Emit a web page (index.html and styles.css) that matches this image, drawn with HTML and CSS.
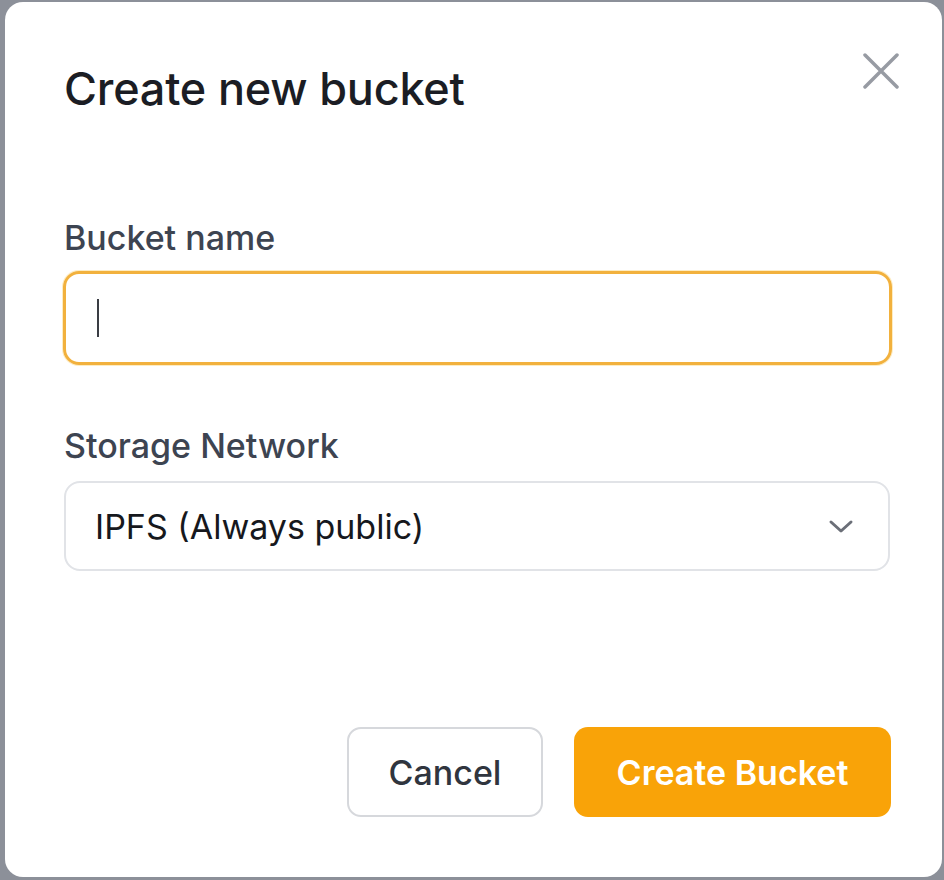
FILE: index.html
```html
<!DOCTYPE html>
<html lang="en">
<head>
<meta charset="utf-8">
<title>Create new bucket</title>
<link rel="stylesheet" href="styles.css">
</head>
<body>
<div class="modal">
  <button class="close" aria-label="Close">
    <svg width="36" height="36" viewBox="0 0 36 36" fill="none" stroke="currentColor" stroke-width="3.5" stroke-linecap="round"><path d="M2 2L34 34M34 2L2 34"/></svg>
  </button>
  <h1 class="title">Create new bucket</h1>
  <div class="form">
    <label class="label">Bucket name</label>
    <div class="input"><span class="caret"></span></div>
    <label class="label label-2">Storage Network</label>
    <div class="select">
      <span>IPFS (Always public)</span>
      <svg width="26" height="16" viewBox="0 0 26 16" fill="none" stroke="currentColor" stroke-width="3" stroke-linecap="round" stroke-linejoin="round"><path d="M3 3L13 12L23 3"/></svg>
    </div>
  </div>
  <div class="actions">
    <button class="btn btn-cancel">Cancel</button>
    <button class="btn btn-primary">Create Bucket</button>
  </div>
</div>
</body>
</html>
```
FILE: styles.css
```css
* { box-sizing: border-box; }
html, body { margin: 0; height: 100%; }
body {
  background: #8c9099;
  padding: 2px 0 0 5px;
  font-family: Inter, "Noto Sans", sans-serif;
  overflow: hidden;
}
.modal {
  position: relative;
  width: 937px;
  height: 875px;
  background: #ffffff;
  border-radius: 18px;
  padding: 61px 51px 60px 58px;
  display: flex;
  flex-direction: column;
}
.close {
  position: absolute;
  top: 51px;
  right: 43px;
  border: 0;
  background: none;
  padding: 0;
  color: #979ba3;
  display: flex;
}
.title {
  margin: 0;
  padding-left: 1px;
  font-size: 45px;
  line-height: 52px;
  font-weight: 500;
  color: #1b1d24;
  letter-spacing: -0.2px;
}
.form {
  margin-top: 103px;
  display: flex;
  flex-direction: column;
}
.label {
  font-size: 34px;
  line-height: 40px;
  font-weight: 500;
  color: #3d4451;
  padding-left: 1px;
}
.label-2 { margin-top: 61px; }
.input {
  margin-top: 13px;
  height: 94px;
  width: 829px;
  border: 3px solid #f2b13d;
  border-radius: 16px;
  box-shadow: 0 0 0 1px rgba(250, 200, 80, 0.35);
  display: flex;
  align-items: center;
  padding-left: 31px;
}
.caret {
  width: 2px;
  height: 38px;
  background: #3a3d44;
}
.select {
  margin-top: 15px;
  margin-left: 1px;
  height: 90px;
  width: 826px;
  border: 2px solid #e1e3e7;
  border-radius: 16px;
  display: flex;
  align-items: center;
  justify-content: space-between;
  padding: 0 34px 0 29px;
  font-size: 34px;
  color: #16181d;
}
.select svg { color: #6b6f78; margin-top: 2px; }
.actions {
  margin-top: auto;
  display: flex;
  justify-content: flex-end;
  gap: 31px;
}
.btn {
  height: 90px;
  border-radius: 14px;
  font-family: Inter, "Noto Sans", sans-serif;
  font-size: 34px;
  padding: 0;
}
.btn-cancel {
  width: 196px;
  background: #ffffff;
  border: 2px solid #d6d8dc;
  color: #30353e;
  font-weight: 500;
}
.btn-primary {
  width: 317px;
  background: #f9a308;
  border: 0;
  color: #ffffff;
  font-weight: 600;
}
```
